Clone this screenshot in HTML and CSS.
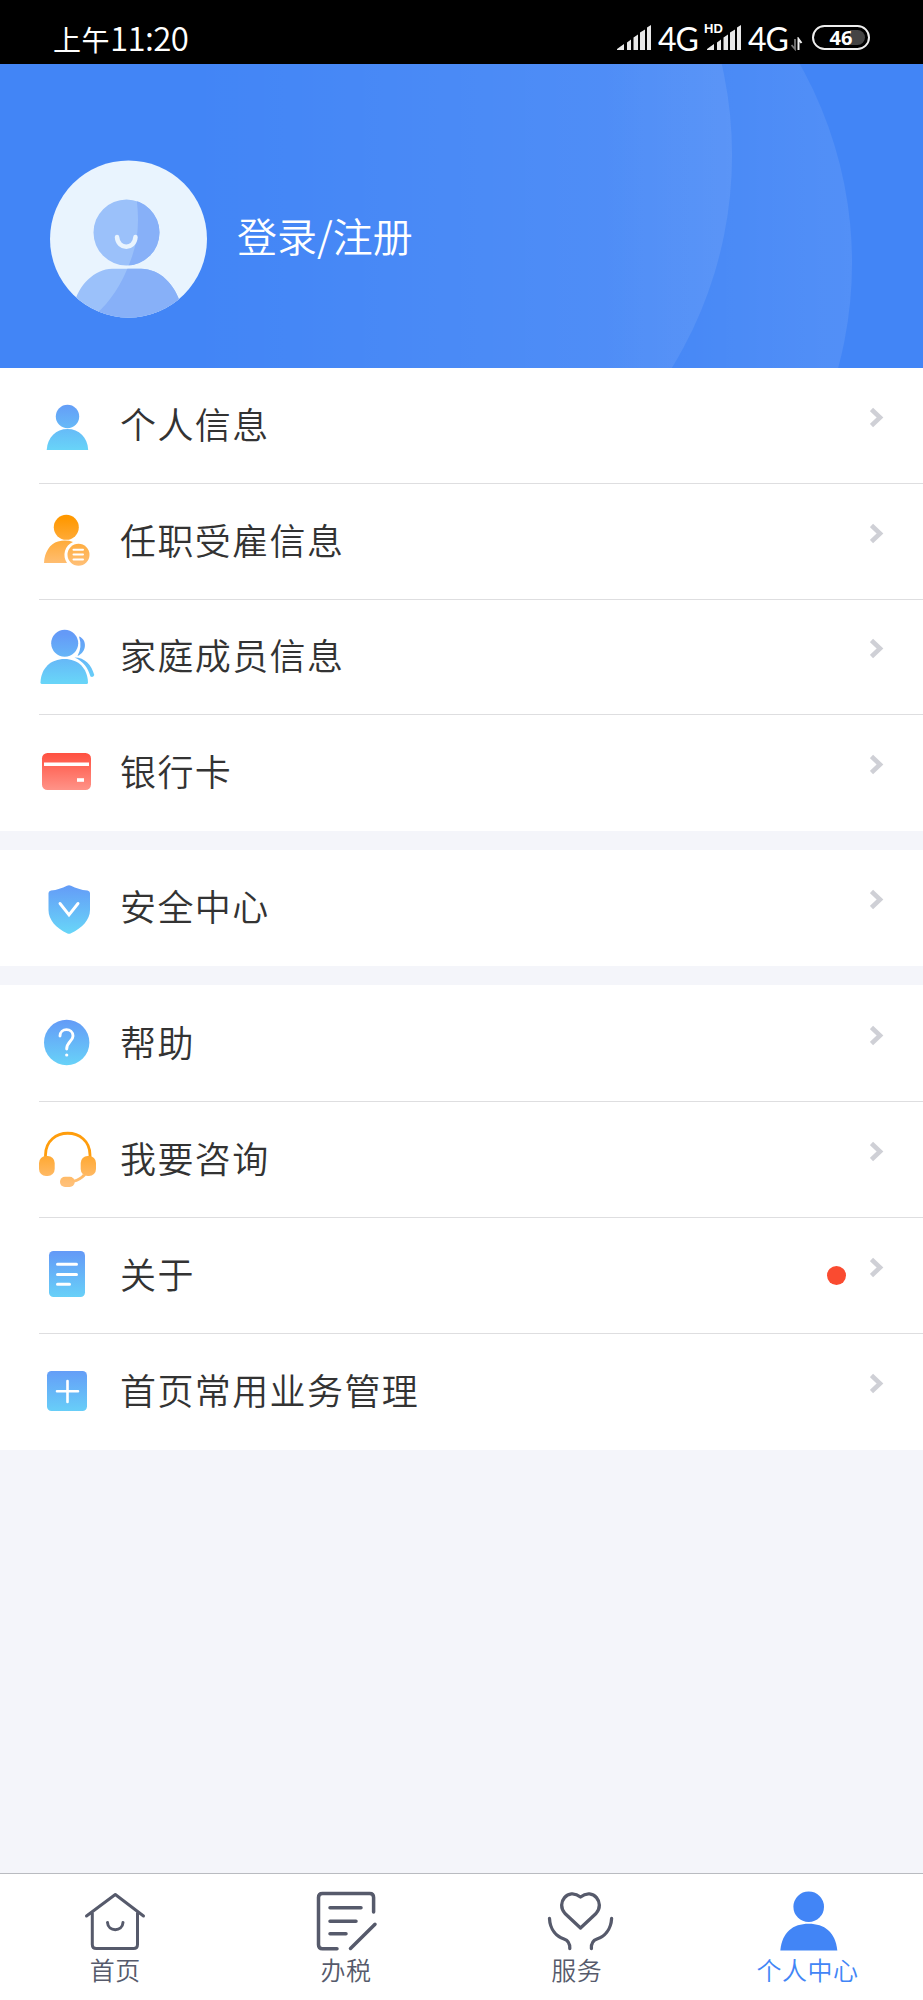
FILE: index.html
```html
<!DOCTYPE html>
<html lang="zh-CN">
<head>
<meta charset="utf-8">
<title>个人中心</title>
<link rel="stylesheet" href="styles.css">
</head>
<body>
<div class="screen">
  <header class="status">
    <span class="clock"><span class="period">上午</span>11:20</span>
    <div class="indicators">
      <svg class="signal" viewBox="0 0 34 26" width="34" height="26"><path d="M0 25V24L7 19V25ZM10 25V17.500L14 14.500V25ZM16.500 25V12.500L21 9.500V25ZM23 25V7.500L28 4.500V25ZM30 25V2.500L34 0V25Z"/></svg>
      <span class="net">4G</span>
      <span class="second">
        <svg class="signal" viewBox="0 0 34 26" width="34" height="26"><path d="M0 25V24L7 19V25ZM10 25V17.500L14 14.500V25ZM16.500 25V12.500L21 9.500V25ZM23 25V7.500L28 4.500V25ZM30 25V2.500L34 0V25Z"/></svg>
        <span class="hd">HD</span>
      </span>
      <span class="net">4G</span>
      <svg class="traffic" viewBox="0 0 12 14" width="12" height="14"><path d="M0.500 8L4 12V2" fill="none" stroke="#777" stroke-width="1.800"/><path d="M7.500 13V2L10.500 6" fill="none" stroke="#eee" stroke-width="2"/></svg>
      <span class="battery"><span class="charge">46</span></span>
    </div>
  </header>

  <section class="hero">
    <svg class="hero-bg" viewBox="0 64 923 304" width="923" height="304">
      <defs>
        <linearGradient id="wave1" gradientUnits="userSpaceOnUse" x1="190" y1="0" x2="732" y2="0"><stop offset="0" stop-color="#fff" stop-opacity="0"/><stop offset="1" stop-color="#fff" stop-opacity=".09"/></linearGradient>
        <linearGradient id="wave2" gradientUnits="userSpaceOnUse" x1="600" y1="0" x2="852" y2="0"><stop offset="0" stop-color="#fff" stop-opacity="0"/><stop offset="1" stop-color="#fff" stop-opacity=".09"/></linearGradient>
      </defs>
      <circle cx="447" cy="263" r="405" fill="url(#wave2)"/>
      <circle cx="325" cy="155" r="407" fill="url(#wave1)"/>
    </svg>
    <svg class="avatar" viewBox="50 160 157 158" width="157" height="158">
      <defs>
        <clipPath id="disc"><circle cx="128.500" cy="239" r="78.500"/></clipPath>
        <clipPath id="figure"><circle cx="126.500" cy="232.500" r="33"/><path d="M74 318V305C78 285 95 269 112 268.700H141C160 269 175 284 181 305V318Z"/></clipPath>
      </defs>
      <circle cx="128.500" cy="239" r="78.500" fill="#e9f4fe"/>
      <g clip-path="url(#disc)"><g clip-path="url(#figure)">
        <rect x="50" y="160" width="157" height="158" fill="#9bc1fa"/>
        <path d="M136 195C140 222 138 242 130 262C122 284 110 302 96 314V320H210V195Z" fill="#87b0f8"/>
      </g></g>
      <path d="M117 237C118 250 134.500 250 135.500 237" fill="none" stroke="#e9f4fe" stroke-width="4.500" stroke-linecap="round"/>
    </svg>
    <span class="login">登录/注册</span>
  </section>

  <svg class="defs" width="0" height="0" aria-hidden="true"><defs>
    <linearGradient id="blue" gradientUnits="userSpaceOnUse" x1="0" y1="34" x2="0" y2="82"><stop offset="0" stop-color="#649af7"/><stop offset="1" stop-color="#68d4f8"/></linearGradient>
    <linearGradient id="orange" gradientUnits="userSpaceOnUse" x1="0" y1="34" x2="0" y2="82"><stop offset="0" stop-color="#ff9800"/><stop offset="1" stop-color="#ffc078"/></linearGradient>
    <linearGradient id="red" gradientUnits="userSpaceOnUse" x1="0" y1="38" x2="0" y2="75"><stop offset="0" stop-color="#ff5040"/><stop offset="1" stop-color="#ff9388"/></linearGradient>
    <symbol id="chevron" viewBox="0 0 14 22"><path d="M1.500 2.500L10 10.500L1.500 18.500" fill="none" stroke="#cfd0d6" stroke-width="4.600"/></symbol>
  </defs></svg>

  <main class="groups">
    <nav class="group personal">
      <a class="row"><svg class="icon" viewBox="36 0 64 116"><g fill="url(#blue)"><circle cx="67.500" cy="48.500" r="11.700"/><path d="M46.700 82C47.500 69 56 61 67.500 61S87.500 69 88.200 82Z"/></g></svg><span class="label">个人信息</span><svg class="chev"><use href="#chevron"/></svg></a>
      <a class="row"><svg class="icon" viewBox="36 0 64 116"><g fill="url(#orange)"><circle cx="66.300" cy="43.300" r="12.500"/><path d="M44 79C44.500 68 50 59.500 58 57.500Q66 55.500 73 58A14 14 0 0 0 67 79Z"/><circle cx="78.500" cy="70.700" r="11"/></g><path d="M73.500 65.700H83M73.500 70.500H83M73.500 75.500H83" stroke="#fff" stroke-width="2" stroke-linecap="round"/></svg><span class="label">任职受雇信息</span><svg class="chev"><use href="#chevron"/></svg></a>
      <a class="row"><svg class="icon" viewBox="36 0 64 116"><g fill="url(#blue)"><circle cx="64.700" cy="43.300" r="13.500"/><path d="M79 36.500C87 39 87.500 52 77.500 56Q82.500 47 79 36.500Z"/><path d="M40.500 82.500C41 68 51 59 64.500 59S87.500 68 88 82.500Q88 84 86.500 84H42Q40.500 84 40.500 82.500Z"/><path d="M74.500 57.500C85 57.500 91.500 65 94.300 75Q93 77.800 90.500 76.500C88 68 83.500 61.500 74.500 57.500Z"/></g></svg><span class="label">家庭成员信息</span><svg class="chev"><use href="#chevron"/></svg></a>
      <a class="row"><svg class="icon" viewBox="36 0 64 116"><rect x="42" y="38" width="49" height="37" rx="5.500" fill="url(#red)"/><path d="M44 49.300H89" stroke="#fff" stroke-width="3.400"/><path d="M77 65H84" stroke="#fff" stroke-width="3.600"/></svg><span class="label">银行卡</span><svg class="chev"><use href="#chevron"/></svg></a>
    </nav>
    <nav class="group security">
      <a class="row"><svg class="icon" viewBox="36 0 64 116"><path d="M67 35.700Q69 34.700 71 35.700C76 38 81 40 87.500 40.500Q90 41 90 43V60C90 70 82 78 71 83.300Q69 84.300 67 83.300C56 78 48.500 70 48.500 60V43Q48.500 41 51 40.500C57 40 62 38 67 35.700Z" fill="url(#blue)"/><path d="M60 53.500L69 65L78 53.500" fill="none" stroke="#fff" stroke-width="2.900" stroke-linecap="round"/></svg><span class="label">安全中心</span><svg class="chev"><use href="#chevron"/></svg></a>
    </nav>
    <nav class="group support">
      <a class="row"><svg class="icon" viewBox="36 0 64 116"><circle cx="66.700" cy="57.500" r="22.700" fill="url(#blue)"/><path d="M60 51C60 42.500 73 42.500 73 51C73 56 66.700 57 66.700 64" fill="none" stroke="#fff" stroke-width="2.900" stroke-linecap="round"/><circle cx="66.700" cy="70" r="1.600" fill="#fff"/></svg><span class="label">帮助</span><svg class="chev"><use href="#chevron"/></svg></a>
      <a class="row"><svg class="icon" viewBox="36 0 64 116"><path d="M45.500 56V53C45.500 24 90 24 90 53V56" fill="none" stroke="#ff9d0c" stroke-width="2.800"/><g fill="url(#orange)"><rect x="39" y="54" width="15.700" height="20" rx="7"/><rect x="80.700" y="54" width="15.300" height="20" rx="7"/><rect x="60" y="74.800" width="14.700" height="10.200" rx="5"/><path d="M73 78Q80 76 83 72L86 73.500Q80 79.500 74 80.500Z"/></g></svg><span class="label">我要咨询</span><svg class="chev"><use href="#chevron"/></svg></a>
      <a class="row"><svg class="icon" viewBox="36 0 64 116"><rect x="49" y="33" width="36" height="46" rx="4.500" fill="url(#blue)"/><path d="M57.500 46.300H76.500M57.500 56.500H76.500M57.500 66.300H69.500" stroke="#fff" stroke-width="3" stroke-linecap="round"/></svg><span class="label">关于</span><i class="dot"></i><svg class="chev"><use href="#chevron"/></svg></a>
      <a class="row"><svg class="icon" viewBox="36 0 64 116"><rect x="47" y="37" width="40" height="40" rx="4.500" fill="url(#blue)"/><path d="M57 57.300H78M67.500 47V68" stroke="#fff" stroke-width="2.600" stroke-linecap="round"/></svg><span class="label">首页常用业务管理</span><svg class="chev"><use href="#chevron"/></svg></a>
    </nav>
  </main>

  <footer class="tabs">
    <a class="tab"><svg viewBox="0 0 70 70" fill="none" stroke="currentColor" stroke-width="3" stroke-linecap="round" stroke-linejoin="round"><path d="M6.500 30L35.300 8.500L63.500 30M12.300 27V58.500Q12.300 62.500 16.300 62.500H53.500Q57.500 62.500 57.500 58.500V27M27.500 36.500C28 46 42.500 46 43 36.500"/></svg><span>首页</span></a>
    <a class="tab"><svg viewBox="0 0 70 70" fill="none" stroke="currentColor" stroke-width="3.500" stroke-linecap="round" stroke-linejoin="round"><path d="M26 62.700H11.500Q7.500 62.700 7.500 58.700V11.500Q7.500 7.500 11.500 7.500H58.700Q62.600 7.500 62.600 11.500V26M19 21.700H50M19 35.300H45M19 47.800H35M39.500 62.500L64 38.300"/></svg><span>办税</span></a>
    <a class="tab"><svg viewBox="0 0 70 70" fill="none" stroke="currentColor" stroke-width="3.300" stroke-linecap="round" stroke-linejoin="round"><path d="M38.500 42L23 27.500C13.500 17 26 1 38.500 11C51 1 63.500 17 54 27.500ZM7.500 32.500C8 44 15 50.500 22 53Q28 55 27.800 62.500M69.600 32.500C69 44 62 50.500 55 53Q49 55 49.400 62.500"/></svg><span>服务</span></a>
    <a class="tab active"><svg viewBox="0 0 70 70" fill="currentColor"><circle cx="35.700" cy="20.700" r="15.300"/><path d="M7.300 64.500C9 46 20 37.700 35.700 37.700S62.500 46 64.300 64.500Z"/></svg><span>个人中心</span></a>
  </footer>
</div>
</body>
</html>
```
FILE: styles.css
```css
* { box-sizing: border-box; }

body {
  margin: 0;
  font-family: "Noto Sans CJK SC", sans-serif;
  font-weight: 350;
}

.screen {
  width: 923px;
  height: 2000px;
  display: flex;
  flex-direction: column;
  background: #f4f5fa;
}

.status {
  height: 64px;
  flex: none;
  display: flex;
  justify-content: space-between;
  padding: 14px 53px 0 53px;
  background: #000;
  color: #fff;
  line-height: 50px;
}

.clock {
  margin-top: -2px;
  font-size: 33px;
  letter-spacing: -0.6px;
}

.period {
  font-size: 28px;
  font-weight: 400;
  letter-spacing: 0.5px;
}

.indicators {
  display: flex;
  font-weight: 400;
}

.signal {
  display: block;
  margin-top: 11px;
  fill: #e8e8e8;
}

.net {
  width: 41px;
  margin-left: 7px;
  font-family: Lato, sans-serif;
  font-size: 32px;
  letter-spacing: -1px;
}

.second {
  position: relative;
  width: 34px;
  margin-left: 8px;
}

.hd {
  position: absolute;
  left: -3px;
  top: 8px;
  padding-right: 1px;
  background: #000;
  font: bold 13px/13px "Liberation Sans", sans-serif;
}

.traffic { margin: 23px 0 0 2px; }

.battery {
  width: 58px;
  height: 25px;
  margin: 11px 0 0 9px;
  padding: 3px;
  border: 2px solid #eee;
  border-radius: 13px;
}

.charge {
  display: block;
  height: 15px;
  border-radius: 8px;
  background: linear-gradient(90deg, #000 68%, #444 68%);
  font: bold 20px/16px "Open Sans", sans-serif;
  text-align: center;
}

.hero {
  position: relative;
  height: 304px;
  flex: none;
  display: flex;
  align-items: center;
  padding: 46px 0 0 50px;
  background: #4285f6;
  color: #fff;
}

.hero-bg {
  position: absolute;
  inset: 0;
}

.avatar {
  position: relative;
  flex: none;
  margin-top: -1px;
}

.login {
  position: relative;
  margin: -9px 0 0 30px;
  font-size: 40px;
}

.defs { position: absolute; }

.groups {
  flex: 1;
  display: flex;
  flex-direction: column;
  gap: 19px;
}

.group {
  display: flex;
  flex-direction: column;
  padding-left: 39px;
  background: #fff;
}

.personal { height: 463px; }
.security { height: 116px; }
.support { height: 465px; }

.row {
  flex: 1 1 0;
  min-height: 0;
  display: flex;
  align-items: center;
  padding-right: 39px;
  border-bottom: 1px solid #dedee0;
}

.row:last-child { border-bottom-color: transparent; }

.support .row:first-child { flex: 0 0 117px; }

.icon {
  width: 64px;
  height: 116px;
  flex: none;
  align-self: flex-start;
  margin: 0 20px -4px -3px;
}

.label {
  flex: 1;
  margin-top: -5px;
  color: #333;
  font-size: 36px;
  letter-spacing: 1.4px;
}

.chev {
  width: 14px;
  height: 22px;
  margin-top: -15px;
}

.dot {
  width: 19px;
  height: 19px;
  margin-right: 24px;
  border-radius: 50%;
  background: #fa4b30;
}

.tabs {
  height: 127px;
  flex: none;
  display: grid;
  grid-template-columns: repeat(4, 1fr);
  border-top: 1px solid #b9bbc0;
  background: #fff;
}

.tab {
  display: flex;
  flex-direction: column;
  align-items: center;
  padding-top: 12px;
  color: #565a6b;
  font-size: 25px;
  line-height: 26px;
  letter-spacing: 0.5px;
}

.tab svg {
  width: 70px;
  height: 70px;
  overflow: visible;
}

.active { color: #4285f6; }
```
